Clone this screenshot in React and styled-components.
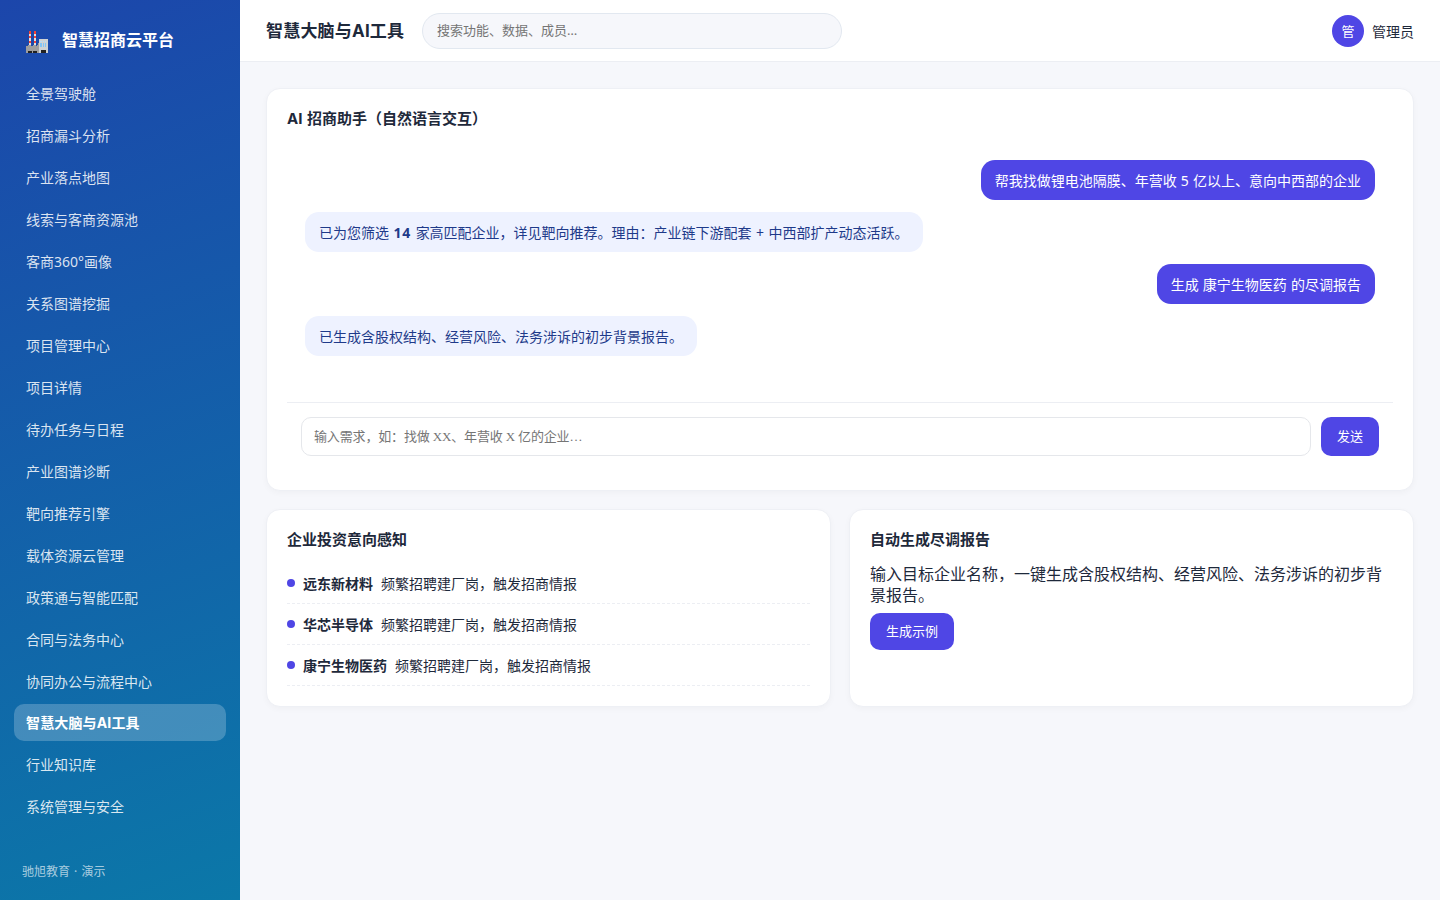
import styled, { createGlobalStyle } from "styled-components";

const GlobalStyle = createGlobalStyle`
  * {
    box-sizing: border-box;
  }
  body {
    margin: 0;
    background-color: #f6f7fb;
    color: #1e293b;
    font-family: "Noto Sans", "Noto Sans CJK SC", sans-serif;
  }
  input,
  button {
    font-family: inherit;
  }
`;

const Layout = styled.div`
  display: flex;
  height: 100vh;
  overflow: hidden;
`;

const Sidebar = styled.aside`
  width: 240px;
  flex-shrink: 0;
  display: flex;
  flex-direction: column;
  padding: 18px 14px;
  color: white;
  background: linear-gradient(160deg, #1c46ab, #0b78a8);
`;

const Brand = styled.div`
  display: flex;
  align-items: center;
  gap: 14px;
  height: 44px;
  padding-left: 12px;
  margin-bottom: 12px;
  font-size: 16px;
  font-weight: 700;
  line-height: 22px;
  svg {
    margin-top: 4px;
  }
`;

const Nav = styled.nav`
  display: flex;
  flex-direction: column;
  gap: 4px;
`;

const NavItem = styled.div`
  padding: ${(props) => (props.$active ? "9px 12px" : "10px 12px 8px")};
  border-radius: 10px;
  font-size: 14px;
  cursor: pointer;
  white-space: nowrap;
  line-height: ${(props) => (props.$active ? 19 : 20)}px;
  letter-spacing: ${(props) => (props.$active ? "0.15px" : "normal")};
  font-weight: ${(props) => (props.$active ? 700 : 400)};
  font-family: ${(props) => (props.$active ? "Inter" : '"Noto Sans"')},
    "Noto Sans CJK SC", sans-serif;
  color: ${(props) => (props.$active ? "white" : "rgba(255, 255, 255, 0.85)")};
  background-color: ${(props) =>
    props.$active ? "rgba(255, 255, 255, 0.22)" : "transparent"};
`;

const SideFooter = styled.div`
  margin-top: auto;
  padding: 0px 8px;
  font-size: 12px;
  line-height: 20px;
  word-spacing: 1px;
  color: rgba(255, 255, 255, 0.65);
`;

const Main = styled.main`
  flex: 1;
  min-width: 0;
`;

const Header = styled.header`
  height: 62px;
  display: flex;
  align-items: center;
  padding: 0px 26px;
  background-color: white;
  border-bottom: 1px solid #eceef3;
`;

const PageTitle = styled.h1`
  width: 138px;
  margin: 0px 18px 0px 0px;
  font-family: Inter, "Noto Sans CJK SC", sans-serif;
  font-size: 17px;
  line-height: 24px;
  letter-spacing: 0.2px;
  white-space: nowrap;
`;

const SearchInput = styled.input`
  width: 420px;
  height: 36px;
  padding: 0px 14px 1px;
  border: 1px solid #e2e8f0;
  border-radius: 18px;
  background-color: #f6f7fb;
  font-size: 13px;
  outline: none;
  &::placeholder {
    color: #757575;
  }
`;

const User = styled.div`
  margin-left: auto;
  display: flex;
  align-items: center;
  gap: 8px;
  font-size: 14px;
`;

const Avatar = styled.div`
  width: 32px;
  height: 32px;
  border-radius: 50%;
  display: flex;
  justify-content: center;
  align-items: center;
  color: white;
  background-color: #4f46e5;
  font-size: 13px;
`;

const Content = styled.div`
  display: flex;
  flex-direction: column;
  gap: 18px;
  padding: 26px;
`;

const CardRow = styled.div`
  display: grid;
  grid-template-columns: 1fr 1fr;
  gap: 18px;
`;

const Card = styled.section`
  padding: 20px;
  border: 1px solid #eef0f5;
  border-radius: 14px;
  background-color: white;
  box-shadow: 0px 2px 6px rgba(15, 23, 42, 0.03);
`;

const CardTitle = styled.h3`
  margin: 0px 0px 14px;
  font-family: Inter, "Noto Sans CJK SC", sans-serif;
  font-size: 15px;
  line-height: 19px;
  word-spacing: 1px;
`;

const ChatBody = styled.div`
  height: 260px;
  display: flex;
  flex-direction: column;
  gap: 12px;
  padding: 18px;
`;

const Bubble = styled.div`
  height: 40px;
  padding: 0px 14px;
  border-radius: 14px;
  font-size: 14px;
  line-height: 41px;
  word-spacing: ${(props) => (props.$mine ? 0.5 : 0.85)}px;
  white-space: nowrap;
  align-self: ${(props) => (props.$mine ? "flex-end" : "flex-start")};
  color: ${(props) => (props.$mine ? "white" : "#1e3a8a")};
  background-color: ${(props) => (props.$mine ? "#4f46e5" : "#eef2ff")};
  b {
    letter-spacing: 0.8px;
  }
`;

const ChatForm = styled.div`
  display: flex;
  gap: 10px;
  padding: 14px;
  border-top: 1px solid #eceef3;
`;

const ChatInput = styled.input`
  flex: 1;
  height: 39px;
  padding: 0px 12px;
  border: 1px solid #e5e7eb;
  border-radius: 10px;
  font-family: "Liberation Serif", "Noto Sans CJK SC", serif;
  font-size: 13px;
  letter-spacing: -0.15px;
  outline: none;
  &::placeholder {
    color: #757575;
  }
`;

const Button = styled.button`
  height: ${(props) => props.$height || 37}px;
  padding: 0px 16px 2px;
  border: none;
  border-radius: 10px;
  color: white;
  background-color: #4f46e5;
  font-size: 13px;
  cursor: pointer;
`;

const SignalRow = styled.div`
  display: flex;
  align-items: center;
  gap: 8px;
  height: 41px;
  border-bottom: 1px dashed #eceef3;
  font-size: 14px;
  line-height: 20px;
  b,
  span {
    padding-top: 2px;
  }
`;

const Dot = styled.i`
  width: 8px;
  height: 8px;
  border-radius: 50%;
  background-color: #4f46e5;
`;

const ReportText = styled.div`
  padding-top: 1px;
  margin-bottom: 7px;
  font-size: 16px;
  line-height: 21px;
`;

const menus = [
  "全景驾驶舱",
  "招商漏斗分析",
  "产业落点地图",
  "线索与客商资源池",
  "客商360°画像",
  "关系图谱挖掘",
  "项目管理中心",
  "项目详情",
  "待办任务与日程",
  "产业图谱诊断",
  "靶向推荐引擎",
  "载体资源云管理",
  "政策通与智能匹配",
  "合同与法务中心",
  "协同办公与流程中心",
  "智慧大脑与AI工具",
  "行业知识库",
  "系统管理与安全",
];

const companies = ["远东新材料", "华芯半导体", "康宁生物医药"];

function FactoryIcon() {
  return (
    <svg width="22" height="22" viewBox="0 0 22 22" shapeRendering="crispEdges">
      <path fill="#e0e0e0" d="M3 0h2v14H3zM8 0h2v14H8z" />
      <path
        fill="#f44336"
        d="M3 0h2v3H3zM8 0h2v3H8zM3 5h2v2H3zM8 5h2v2H8zM3 10h2v2H3zM8 10h2v2H8z"
      />
      <path fill="#9e9e9e" d="M0 15h2v-1h3v1h2v-1h3v1h1v-1h1v-2h1v10H0z" />
      <path fill="#cfd2d4" d="M13 8h9v14h-9z" />
      <path fill="#82c4f5" d="M14 12h2v4h-2zM17 12h1v4h-1zM19 12h1v4h-1z" />
      <path fill="#b8dcf5" d="M14 10h2v1h-2zM17 10h1v1h-1zM19 10h1v1h-1z" />
      <path fill="#212121" d="M2 20h4v2H2zM7 20h4v2H7zM15 19h5v3h-5z" />
    </svg>
  );
}

function App() {
  return (
    <Layout>
      <GlobalStyle />
      <Sidebar>
        <Brand>
          <FactoryIcon />
          <span>智慧招商云平台</span>
        </Brand>
        <Nav>
          {menus.map((menu) => (
            <NavItem key={menu} $active={menu === "智慧大脑与AI工具"}>
              {menu}
            </NavItem>
          ))}
        </Nav>
        <SideFooter>驰旭教育 · 演示</SideFooter>
      </Sidebar>
      <Main>
        <Header>
          <PageTitle>智慧大脑与AI工具</PageTitle>
          <SearchInput placeholder="搜索功能、数据、成员…" />
          <User>
            <Avatar>管</Avatar>
            <span>管理员</span>
          </User>
        </Header>
        <Content>
          <Card>
            <CardTitle>AI 招商助手（自然语言交互）</CardTitle>
            <ChatBody>
              <Bubble $mine>
                帮我找做锂电池隔膜、年营收 5 亿以上、意向中西部的企业
              </Bubble>
              <Bubble>
                已为您筛选 <b>14</b>{" "}
                家高匹配企业，详见靶向推荐。理由：产业链下游配套 +
                中西部扩产动态活跃。
              </Bubble>
              <Bubble $mine>生成 康宁生物医药 的尽调报告</Bubble>
              <Bubble>已生成含股权结构、经营风险、法务涉诉的初步背景报告。</Bubble>
            </ChatBody>
            <ChatForm>
              <ChatInput placeholder="输入需求，如：找做 XX、年营收 X 亿的企业…" />
              <Button $height={39}>发送</Button>
            </ChatForm>
          </Card>
          <CardRow>
            <Card>
              <CardTitle>企业投资意向感知</CardTitle>
              {companies.map((company) => (
                <SignalRow key={company}>
                  <Dot />
                  <b>{company}</b>
                  <span>频繁招聘建厂岗，触发招商情报</span>
                </SignalRow>
              ))}
            </Card>
            <Card>
              <CardTitle>自动生成尽调报告</CardTitle>
              <ReportText>
                输入目标企业名称，一键生成含股权结构、经营风险、法务涉诉的初步背景报告。
              </ReportText>
              <Button>生成示例</Button>
            </Card>
          </CardRow>
        </Content>
      </Main>
    </Layout>
  );
}

export default App;
